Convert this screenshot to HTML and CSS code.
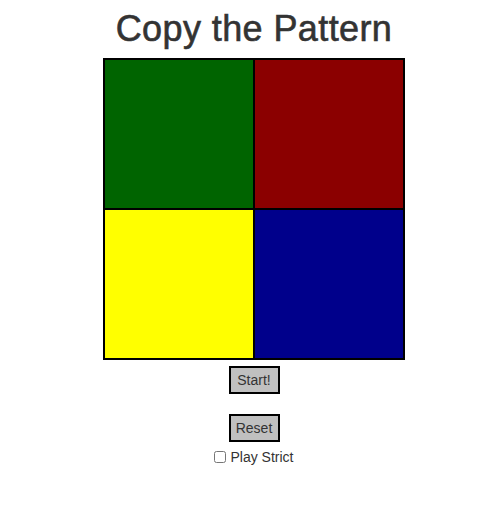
FILE: index.html
```
<!DOCTYPE html>
<html>
<head>
<meta charset="utf-8">
<link rel="stylesheet" href="styles.css">
</head>
<body>
<div class="page">
  <h1 class="title">Copy the Pattern</h1>
  <div class="board">
    <div class="pad green"></div>
    <div class="pad red"></div>
    <div class="pad yellow"></div>
    <div class="pad blue"></div>
  </div>
  <button class="btn start">Start!</button>
  <button class="btn reset">Reset</button>
  <label class="strict"><input type="checkbox" class="check"><span>Play Strict</span></label>
</div>
</body>
</html>
```
FILE: styles.css
```
html, body {
  margin: 0;
  padding: 0;
  background: #fff;
}
body {
  font-family: "Liberation Sans", Arial, sans-serif;
  font-size: 14px;
  color: #333;
}
.page {
  padding-left: 14px;
  display: flex;
  flex-direction: column;
  align-items: center;
}
.title {
  margin: 9px 0 9px 0;
  font-size: 36px;
  line-height: 40px;
  font-weight: normal;
  letter-spacing: 0.4px;
  color: #333;
  -webkit-text-stroke: 0.6px #333;
}
.board {
  display: grid;
  grid-template-columns: 150px 150px;
  grid-template-rows: 150px 150px;
  border: 1px solid #000;
}
.pad {
  box-sizing: border-box;
  border: 1px solid #000;
}
.green { background: #006400; }
.red { background: #8b0000; }
.yellow { background: #ffff00; }
.blue { background: #00008b; }
.btn {
  box-sizing: border-box;
  width: 51px;
  height: 28px;
  padding: 0;
  border: 2px solid #000;
  background: #c0c0c0;
  color: #333;
  font-family: "Liberation Sans", Arial, sans-serif;
  font-size: 14px;
  border-radius: 0;
}
.start { margin-top: 6px; }
.reset { margin-top: 20px; }
.strict {
  margin-top: 5px;
  display: flex;
  align-items: center;
  line-height: 20px;
  height: 20px;
}
.check {
  width: 12px;
  height: 12px;
  margin: 0 4px 0 0;
}
```
